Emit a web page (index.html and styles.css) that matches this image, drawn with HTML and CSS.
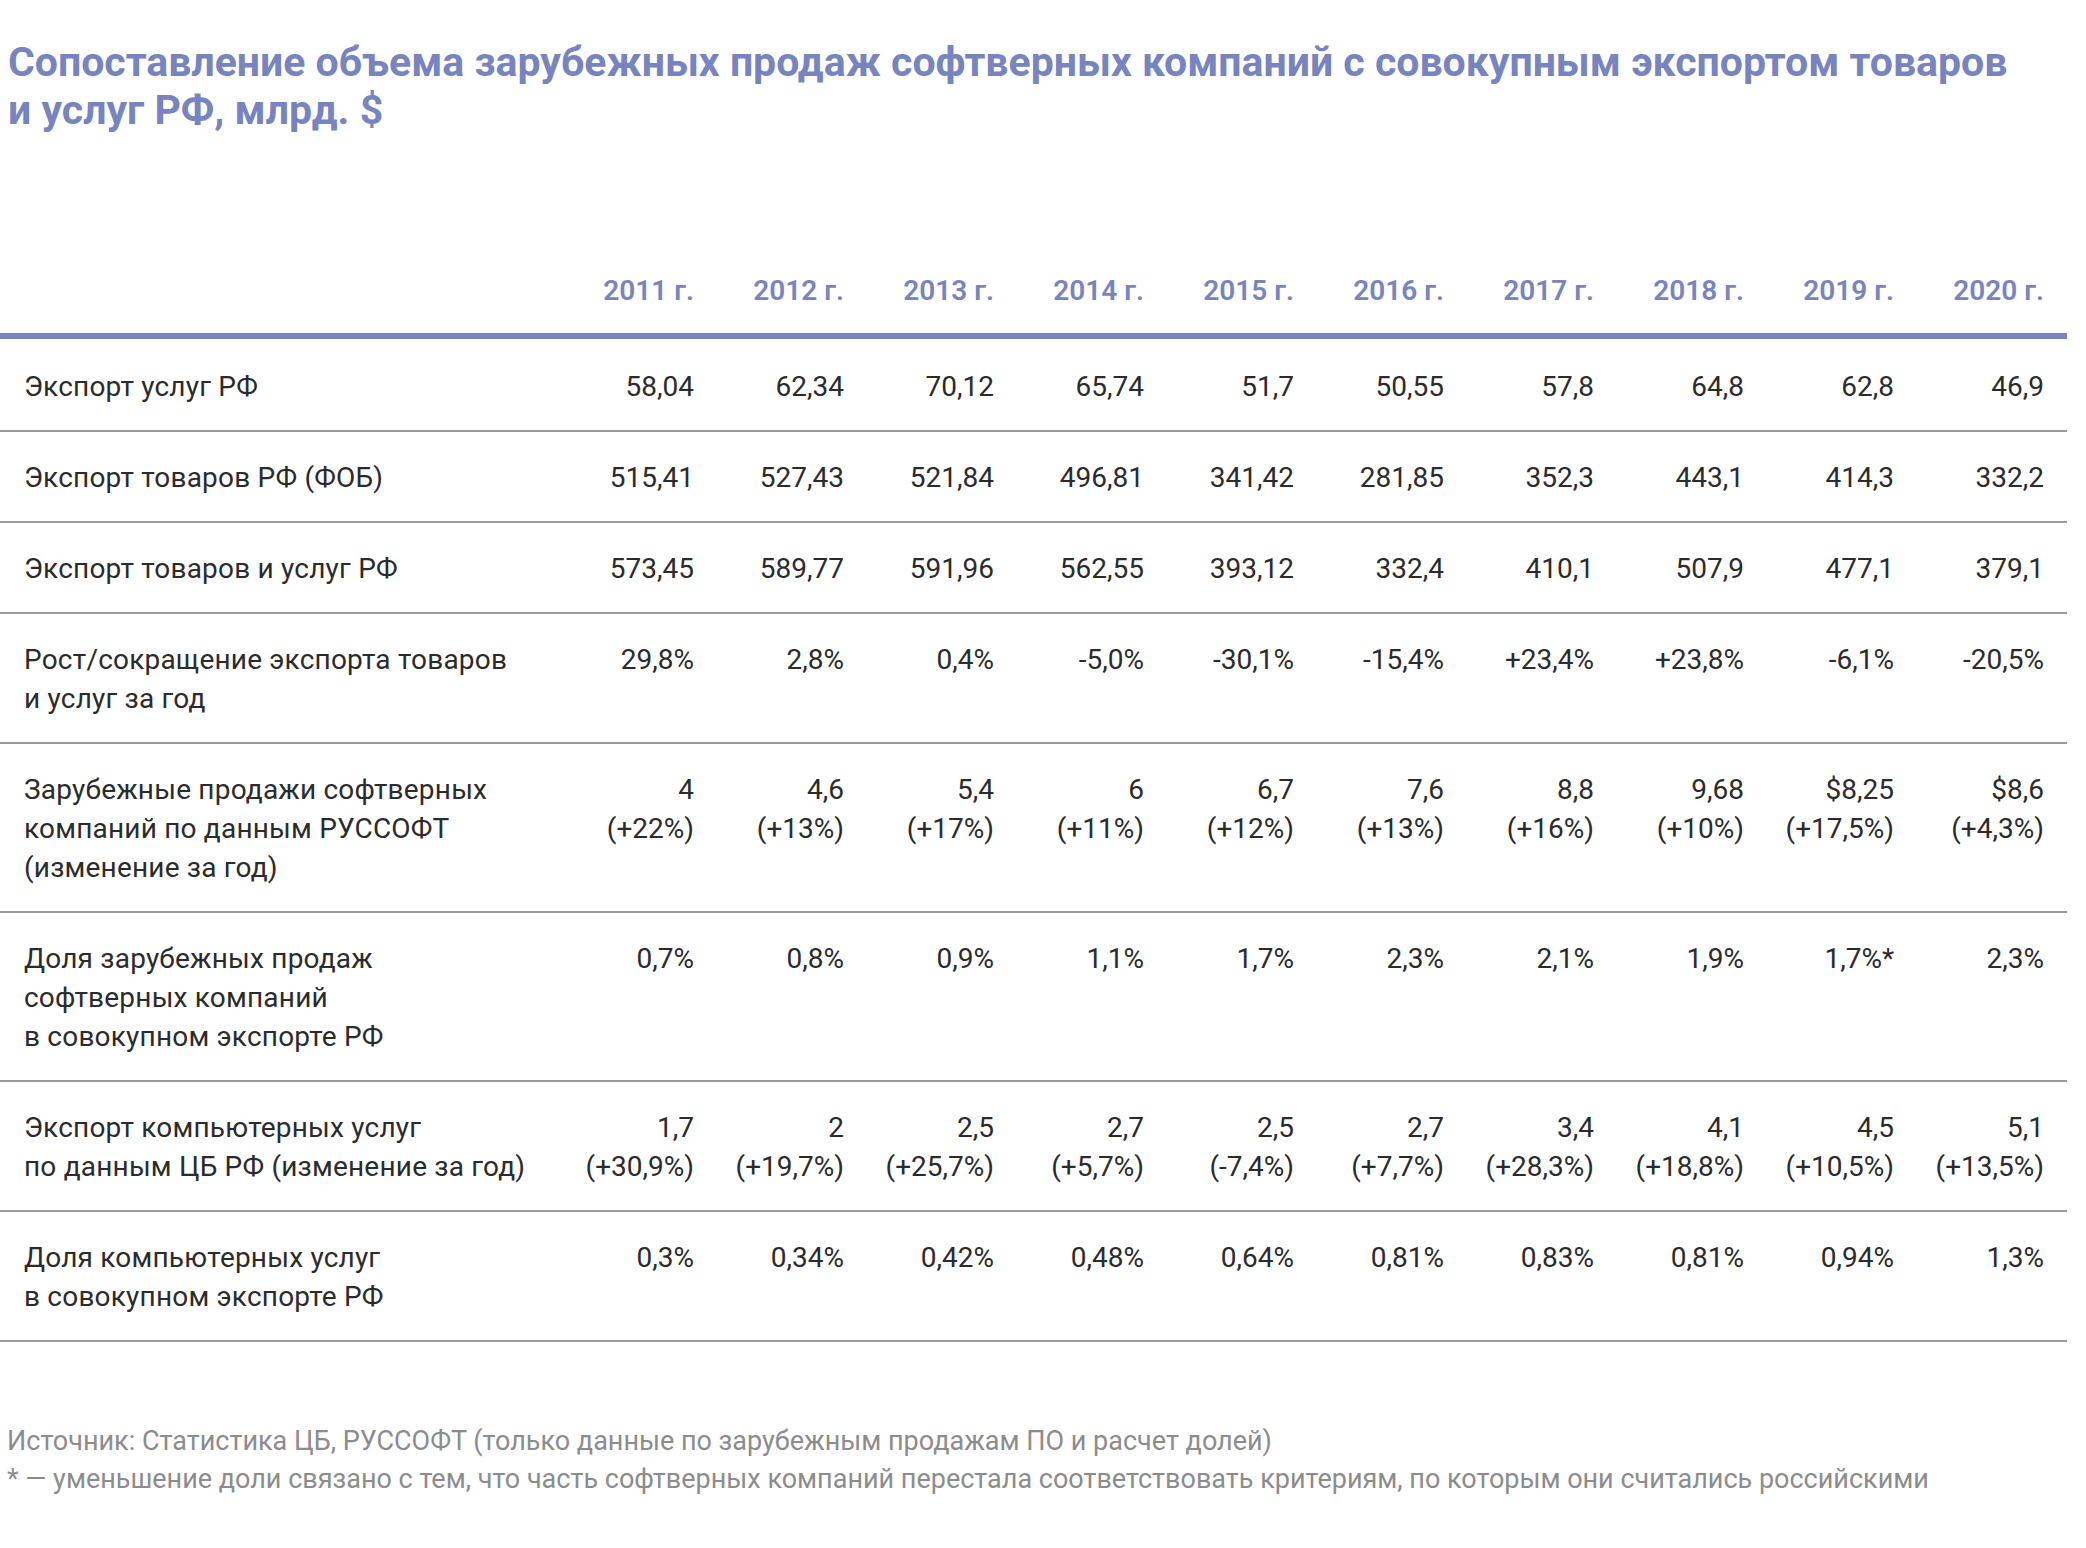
FILE: index.html
```html
<!DOCTYPE html>
<html lang="ru">
<head>
<meta charset="utf-8">
<title>Сопоставление объема зарубежных продаж</title>
<link rel="stylesheet" href="styles.css">
</head>
<body>
<div class="page">
  <h1 class="title">Сопоставление объема зарубежных продаж софтверных компаний с совокупным экспортом товаров<br>и услуг РФ, млрд. $</h1>
  <table class="data">
    <colgroup>
      <col class="c-label">
      <col class="c-num"><col class="c-num"><col class="c-num"><col class="c-num"><col class="c-num">
      <col class="c-num"><col class="c-num"><col class="c-num"><col class="c-num"><col class="c-num">
    </colgroup>
    <thead>
      <tr>
        <th class="lbl"></th>
        <th>2011 г.</th><th>2012 г.</th><th>2013 г.</th><th>2014 г.</th><th>2015 г.</th>
        <th>2016 г.</th><th>2017 г.</th><th>2018 г.</th><th>2019 г.</th><th>2020 г.</th>
      </tr>
    </thead>
    <tbody>
      <tr class="first">
        <td class="lbl">Экспорт услуг РФ</td>
        <td>58,04</td><td>62,34</td><td>70,12</td><td>65,74</td><td>51,7</td><td>50,55</td><td>57,8</td><td>64,8</td><td>62,8</td><td>46,9</td>
      </tr>
      <tr>
        <td class="lbl">Экспорт товаров РФ (ФОБ)</td>
        <td>515,41</td><td>527,43</td><td>521,84</td><td>496,81</td><td>341,42</td><td>281,85</td><td>352,3</td><td>443,1</td><td>414,3</td><td>332,2</td>
      </tr>
      <tr>
        <td class="lbl">Экспорт товаров и услуг РФ</td>
        <td>573,45</td><td>589,77</td><td>591,96</td><td>562,55</td><td>393,12</td><td>332,4</td><td>410,1</td><td>507,9</td><td>477,1</td><td>379,1</td>
      </tr>
      <tr>
        <td class="lbl">Рост/сокращение экспорта товаров<br>и услуг за год</td>
        <td>29,8%</td><td>2,8%</td><td>0,4%</td><td>-5,0%</td><td>-30,1%</td><td>-15,4%</td><td>+23,4%</td><td>+23,8%</td><td>-6,1%</td><td>-20,5%</td>
      </tr>
      <tr>
        <td class="lbl">Зарубежные продажи софтверных<br>компаний по данным РУССОФТ<br>(изменение за год)</td>
        <td>4<br>(+22%)</td><td>4,6<br>(+13%)</td><td>5,4<br>(+17%)</td><td>6<br>(+11%)</td><td>6,7<br>(+12%)</td><td>7,6<br>(+13%)</td><td>8,8<br>(+16%)</td><td>9,68<br>(+10%)</td><td>$8,25<br>(+17,5%)</td><td>$8,6<br>(+4,3%)</td>
      </tr>
      <tr>
        <td class="lbl">Доля зарубежных продаж<br>софтверных компаний<br>в совокупном экспорте РФ</td>
        <td>0,7%</td><td>0,8%</td><td>0,9%</td><td>1,1%</td><td>1,7%</td><td>2,3%</td><td>2,1%</td><td>1,9%</td><td>1,7%*</td><td>2,3%</td>
      </tr>
      <tr>
        <td class="lbl">Экспорт компьютерных услуг<br>по данным ЦБ РФ (изменение за год)</td>
        <td>1,7<br>(+30,9%)</td><td>2<br>(+19,7%)</td><td>2,5<br>(+25,7%)</td><td>2,7<br>(+5,7%)</td><td>2,5<br>(-7,4%)</td><td>2,7<br>(+7,7%)</td><td>3,4<br>(+28,3%)</td><td>4,1<br>(+18,8%)</td><td>4,5<br>(+10,5%)</td><td>5,1<br>(+13,5%)</td>
      </tr>
      <tr>
        <td class="lbl">Доля компьютерных услуг<br>в совокупном экспорте РФ</td>
        <td>0,3%</td><td>0,34%</td><td>0,42%</td><td>0,48%</td><td>0,64%</td><td>0,81%</td><td>0,83%</td><td>0,81%</td><td>0,94%</td><td>1,3%</td>
      </tr>
    </tbody>
  </table>
  <div class="notes">
    <p>Источник: Статистика ЦБ, РУССОФТ (только данные по зарубежным продажам ПО и расчет долей)</p>
    <p>* — уменьшение доли связано с тем, что часть софтверных компаний перестала соответствовать критериям, по которым они считались российскими</p>
  </div>
</div>
</body>
</html>
```

FILE: styles.css
```css
html, body {
  margin: 0;
  padding: 0;
  background: #ffffff;
}

.page {
  font-family: Roboto, "Liberation Sans", sans-serif;
  color: #2b2b2b;
  width: 2086px;
}

.title {
  margin: 38px 0 0 0;
  padding-left: 8px;
  font-size: 41px;
  line-height: 48px;
  font-weight: 700;
  color: #7784bf;
  letter-spacing: 0;
}

.data {
  margin-top: 137px;
  width: 2067px;
  table-layout: fixed;
  border-collapse: collapse;
  font-size: 28px;
  line-height: 39px;
}

.c-label { width: 567px; }
.c-num { width: 150px; }

.data th {
  font-weight: 600;
  color: #7784bf;
  text-align: right;
  padding: 0 23px 23px 0;
  border-bottom: 6px solid #7784bf;
  white-space: nowrap;
}

.data td {
  text-align: right;
  vertical-align: top;
  padding: 26px 23px 24px 0;
  border-bottom: 2px solid #9a9a9a;
  white-space: nowrap;
}

.data tr.first td {
  padding-top: 28px;
}

.data td.lbl,
.data th.lbl {
  text-align: left;
  padding-left: 24px;
  padding-right: 0;
  letter-spacing: 0.2px;
}

.notes {
  margin-top: 80px;
  padding-left: 7px;
  color: #8c8c8c;
  font-size: 27px;
  line-height: 38px;
}

.notes p {
  margin: 0;
}
```
